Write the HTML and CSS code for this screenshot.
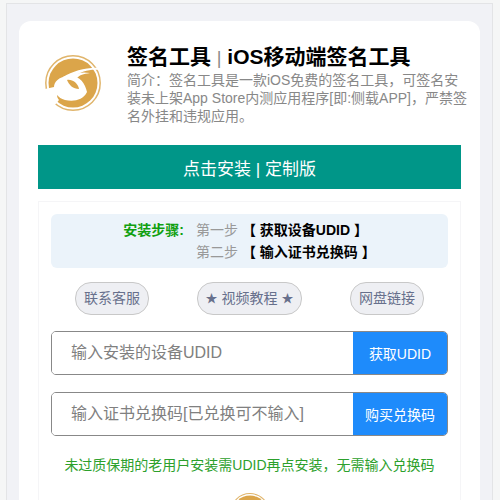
FILE: index.html
```html
<!DOCTYPE html>
<html lang="zh-CN">
<head>
    <meta charset="UTF-8">
    <meta name="viewport" content="width=device-width, initial-scale=1.0">
    <title>签名工具</title>
    <link rel="stylesheet" href="styles.css">
</head>
<body>
    <svg class="symbols" aria-hidden="true">
        <symbol id="logo" viewBox="0 0 56 56">
            <circle cx="28" cy="28" r="27.2" fill="none" stroke="#e0b56c" stroke-width="1.5"/>
            <circle cx="28" cy="28" r="24.5" fill="#dba54a"/>
            <path d="M0 34 L9 32 C9 27 14 22 22 21 C34 19 40 28 42 37 C38 45 29 47 20 45 C16 44 14 42 12 40 C12 42 13 44 14 45 L9 51 L0 46 Z" fill="#fff"/>
            <path d="M18 22 C28 16 42 12 55 13 L55 15 C45 14 36 16 29 22 Z" fill="#fff"/>
            <path d="M27 22 C33 17 38 17 45 18 C38 19 35 20 32 23 Z" fill="#fff"/>
            <path d="M22 25 C27 24 33 28 34 34 C28 34 24 30 22 25 Z" fill="#dba54a"/>
        </symbol>
    </svg>

    <div class="container">
        <div class="card">
            <header class="app-header">
                <svg class="logo" role="img" aria-label="签名工具"><use href="#logo"/></svg>
                <div class="app-info">
                    <h1>签名工具 <span>|</span> iOS移动端签名工具</h1>
                    <p>简介：签名工具是一款iOS免费的签名工具，可签名安装未上架App Store内测应用程序[即:侧载APP]，严禁签名外挂和违规应用。</p>
                </div>
            </header>

            <button type="button" class="install-btn">点击安装 | 定制版</button>

            <form class="panel">
                <div class="steps">
                    <strong class="steps-label">安装步骤:</strong>
                    <div class="steps-list">
                        <div>第一步 <b>【 获取设备UDID 】</b></div>
                        <div>第二步 <b>【 输入证书兑换码 】</b></div>
                    </div>
                </div>

                <nav class="links">
                    <a href="#">联系客服</a>
                    <a href="#"><span class="star">★</span> 视频教程 <span class="star">★</span></a>
                    <a href="#">网盘链接</a>
                </nav>

                <div class="field">
                    <input type="text" aria-label="设备UDID" placeholder="输入安装的设备UDID">
                    <button type="button">获取UDID</button>
                </div>
                <div class="field">
                    <input type="text" aria-label="证书兑换码" placeholder="输入证书兑换码[已兑换可不输入]">
                    <button type="button">购买兑换码</button>
                </div>

                <p class="note">未过质保期的老用户安装需UDID再点安装，无需输入兑换码</p>
                <svg class="logo logo-small" aria-hidden="true"><use href="#logo"/></svg>
            </form>
        </div>
    </div>
</body>
</html>
```
FILE: styles.css
```css
* {
    box-sizing: border-box;
}

html {
    scrollbar-width: none;
}

body {
    margin: 0;
    padding: 3px 7px 0 6px;
    background: #f5f6f6;
    font-family: "Liberation Sans", "Noto Sans CJK SC", sans-serif;
    font-size: 14px;
    color: #888;
}

h1, p {
    margin: 0;
}

button, input {
    font-family: inherit;
}

.symbols {
    position: absolute;
    width: 0;
    height: 0;
}

.container {
    min-height: 100vh;
    padding: 17px 12px;
    background: #f1f2f6;
    border: 1px solid #e3e4e6;
    border-bottom: none;
}

.card {
    padding: 23px 19px;
    background: #fff;
    border-radius: 12px;
}

.app-header {
    display: flex;
    gap: 26px;
    margin: 0 -8px 20px 7px;
}

.logo {
    flex: none;
    width: 56px;
    height: 56px;
    margin-top: 11px;
}

.app-info h1 {
    font-size: 21px;
    line-height: 26px;
    color: #000;
}

.app-info h1 span {
    font-size: 18px;
    font-weight: normal;
    color: #888;
}

.app-info p {
    line-height: 18px;
}

.install-btn {
    display: block;
    width: 100%;
    height: 44px;
    border: none;
    background: #009688;
    color: #fff;
    font-size: 17px;
    cursor: pointer;
}

.panel {
    margin-top: 12px;
    padding: 12px;
    border: 1px solid #f5f5f7;
}

.steps {
    display: flex;
    justify-content: center;
    gap: 12px;
    padding: 5px 0;
    background: #ebf3fa;
    border-radius: 6px;
    line-height: 22px;
    color: #999;
}

.steps-label {
    color: #11a011;
}

.steps b {
    color: #000;
}

.links {
    display: flex;
    justify-content: space-between;
    margin: 14px 24px 16px;
}

.links a {
    padding: 0 8px;
    border: 1px solid #c8c8c8;
    border-radius: 16px;
    background: #eeeff3;
    line-height: 30px;
    color: #67708c;
    text-decoration: none;
}

.links .star {
    font-size: 12px;
}

.field {
    display: flex;
    height: 44px;
    margin-bottom: 17px;
    border: 1px solid #888;
    border-radius: 5px;
    overflow: hidden;
}

.field input {
    flex: 1;
    min-width: 0;
    padding: 0 19px;
    border: none;
    outline: none;
    font-size: 16px;
}

.field input::placeholder {
    color: #808080;
}

.field button {
    width: 94px;
    padding: 0;
    border: none;
    background: #1e8bfb;
    color: #fff;
    font-size: 14px;
    cursor: pointer;
}

.note {
    line-height: 24px;
    text-align: center;
    color: #2ca02c;
}

.logo-small {
    display: block;
    width: 40px;
    height: 40px;
    margin: 16px auto 0;
}
```
